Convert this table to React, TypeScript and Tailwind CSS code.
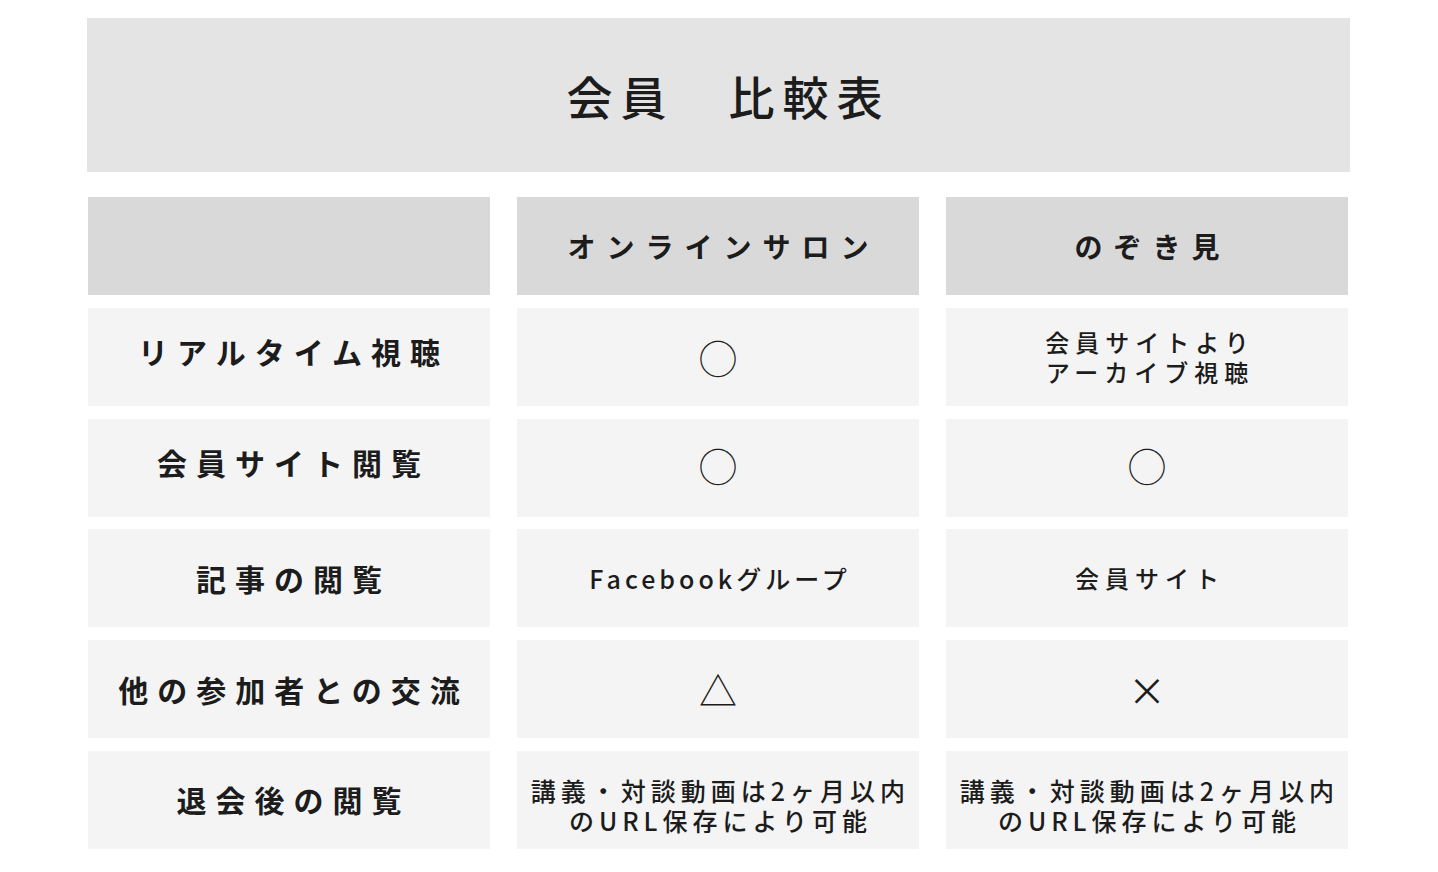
import React from 'react';

const font = { fontFamily: '"Noto Sans CJK JP", "Noto Sans", sans-serif' };

type Row = {
  label: string;
  labelPad?: string;
  salon: React.ReactNode;
  peek: React.ReactNode;
};

const Mark = ({ children, up }: { children: React.ReactNode; up?: boolean }) => (
  <span className={`text-[38px] font-normal leading-none ${up ? 'pb-[6px]' : ''}`}>{children}</span>
);

const Note = () => (
  <span className="text-[25px] font-medium leading-[30px] tracking-[5px] pl-[5px] pt-[10px]">
    講義・対談動画は2ヶ月以内
    <br />
    のURL保存により可能
  </span>
);

const rows: Row[] = [
  {
    label: 'リアルタイム視聴',
    labelPad: 'pb-[10px]',
    salon: <Mark>◯</Mark>,
    peek: (
      <span className="text-[24px] font-medium leading-[30px] tracking-[6px] pl-[6px]">
        会員サイトより
        <br />
        アーカイブ視聴
      </span>
    ),
  },
  {
    label: '会員サイト閲覧',
    labelPad: 'pb-[10px]',
    salon: <Mark up>◯</Mark>,
    peek: <Mark up>◯</Mark>,
  },
  {
    label: '記事の閲覧',
    salon: <span className="text-[25px] font-medium tracking-[4px] pl-[4px]">Facebookグループ</span>,
    peek: <span className="text-[24px] font-medium tracking-[6px] pl-[6px]">会員サイト</span>,
  },
  { label: '他の参加者との交流', salon: <Mark>△</Mark>, peek: <Mark>×</Mark> },
  { label: '退会後の閲覧', salon: <Note />, peek: <Note /> },
];

const Cell = ({ children, head }: { children?: React.ReactNode; head?: boolean }) => (
  <div
    className={`h-[98px] flex items-center justify-center text-center text-[#1c1c1c] ${
      head ? 'bg-[#d9d9d9]' : 'bg-[#f4f4f4]'
    }`}
  >
    {children}
  </div>
);

export default function App() {
  return (
    <div className="w-[1438px] h-[872px] bg-white pt-[18px]" style={font}>
      {/* Title */}
      <div className="ml-[87px] w-[1263px] h-[154px] bg-[#e4e4e4] flex items-center justify-center">
        <h1 className="text-[46px] font-medium tracking-[8px] pl-[20px] text-[#1c1c1c]">会員　比較表</h1>
      </div>

      {/* Table */}
      <div className="ml-[88px] mt-[25px] grid grid-cols-[402px_402px_402px] gap-x-[27px] gap-y-[12.8px]">
        <Cell head />
        <Cell head>
          <span className="text-[28px] font-semibold tracking-[11px] pl-[11px]">オンラインサロン</span>
        </Cell>
        <Cell head>
          <span className="text-[28px] font-semibold tracking-[11px] pl-[11px]">のぞき見</span>
        </Cell>

        {rows.map((r) => (
          <React.Fragment key={r.label}>
            <Cell>
              <span className={`text-[30px] font-semibold tracking-[9px] pl-[9px] ${r.labelPad ?? ''}`}>
                {r.label}
              </span>
            </Cell>
            <Cell>{r.salon}</Cell>
            <Cell>{r.peek}</Cell>
          </React.Fragment>
        ))}
      </div>
    </div>
  );
}
